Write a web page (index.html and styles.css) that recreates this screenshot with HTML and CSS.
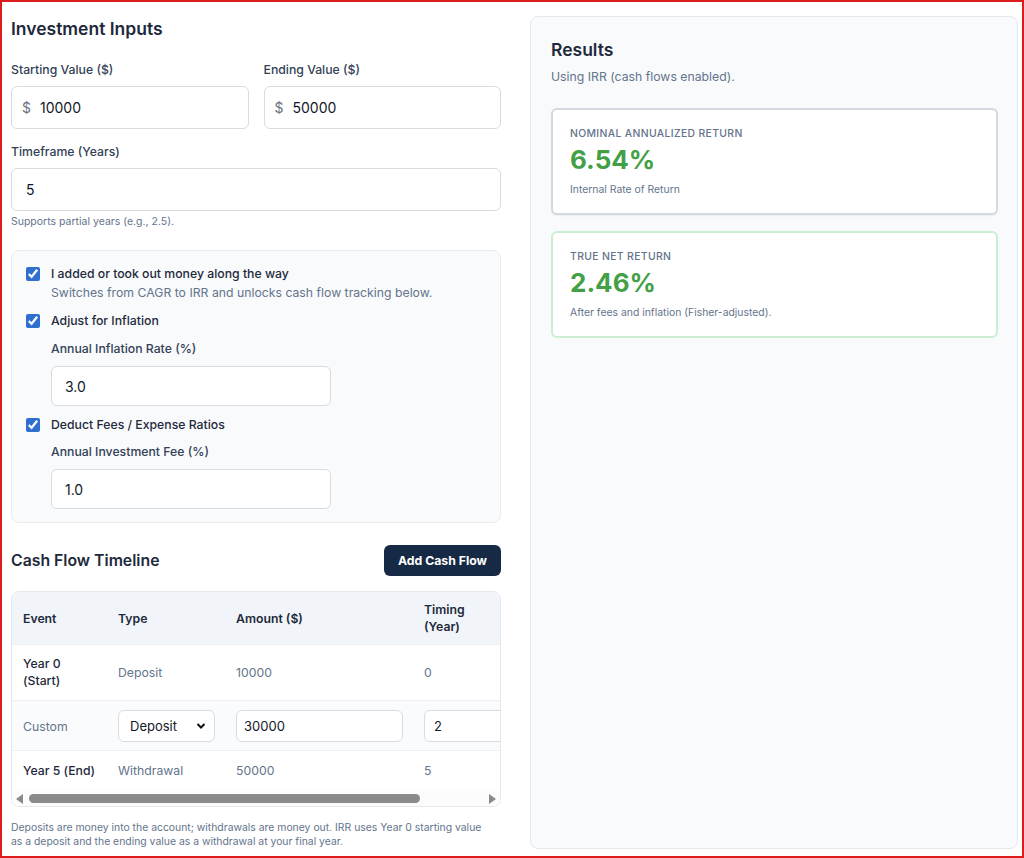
FILE: index.html
```html
<!DOCTYPE html>
<html lang="en">
<head>
  <meta charset="UTF-8" />
  <meta name="viewport" content="width=device-width, initial-scale=1.0" />
  <title>Annualized Return Calculator</title>
  <link rel="stylesheet" href="styles.css">
</head>
<body>
  <div class="frame">
    <div class="page">
      <!-- Inputs column -->
      <section class="inputs">
        <h2 class="section-title">Investment Inputs</h2>

        <div class="field-row">
          <div class="field">
            <label for="start-value">Starting Value ($)</label>
            <div class="money-input">
              <span class="prefix">$</span>
              <input type="text" id="start-value" value="10000">
            </div>
          </div>
          <div class="field">
            <label for="end-value">Ending Value ($)</label>
            <div class="money-input">
              <span class="prefix">$</span>
              <input type="text" id="end-value" value="50000">
            </div>
          </div>
        </div>

        <div class="field">
          <label for="years">Timeframe (Years)</label>
          <input type="text" id="years" class="text-input" value="5">
          <div class="hint">Supports partial years (e.g., 2.5).</div>
        </div>

        <div class="options">
          <label class="check">
            <input type="checkbox" checked>
            <span>I added or took out money along the way</span>
          </label>
          <div class="check-note">Switches from CAGR to IRR and unlocks cash flow tracking below.</div>

          <label class="check spaced">
            <input type="checkbox" checked>
            <span>Adjust for Inflation</span>
          </label>
          <div class="sub-field">
            <label for="inflation">Annual Inflation Rate (%)</label>
            <input type="text" id="inflation" class="text-input short" value="3.0">
          </div>

          <label class="check spaced">
            <input type="checkbox" checked>
            <span>Deduct Fees / Expense Ratios</span>
          </label>
          <div class="sub-field tight">
            <label for="fee">Annual Investment Fee (%)</label>
            <input type="text" id="fee" class="text-input short" value="1.0">
          </div>
        </div>

        <div class="timeline-head">
          <h3>Cash Flow Timeline</h3>
          <button type="button" class="btn-dark">Add Cash Flow</button>
        </div>

        <div class="table-wrap">
          <div class="table-scroll">
            <table class="flows">
              <colgroup>
                <col style="width: 95px">
                <col style="width: 118px">
                <col style="width: 188px">
                <col style="width: 171px">
              </colgroup>
              <thead>
                <tr>
                  <th>Event</th>
                  <th>Type</th>
                  <th>Amount ($)</th>
                  <th><span class="th-wrap">Timing (Year)</span></th>
                </tr>
              </thead>
              <tbody>
                <tr>
                  <td class="event">Year 0 (Start)</td>
                  <td class="muted">Deposit</td>
                  <td class="muted">10000</td>
                  <td class="muted">0</td>
                </tr>
                <tr class="custom">
                  <td class="muted">Custom</td>
                  <td>
                    <select class="cell-select">
                      <option selected>Deposit</option>
                      <option>Withdrawal</option>
                    </select>
                  </td>
                  <td><input type="text" class="cell-input" value="30000"></td>
                  <td><input type="text" class="cell-input timing" value="2"></td>
                </tr>
                <tr>
                  <td class="event">Year 5 (End)</td>
                  <td class="muted">Withdrawal</td>
                  <td class="muted">50000</td>
                  <td class="muted">5</td>
                </tr>
              </tbody>
            </table>
          </div>
          <div class="hscroll">
            <span class="arrow arrow-left"></span>
            <div class="track"><div class="thumb"></div></div>
            <span class="arrow arrow-right"></span>
          </div>
        </div>

        <p class="note">Deposits are money into the account; withdrawals are money out. IRR uses Year 0 starting value as a deposit and the ending value as a withdrawal at your final year.</p>
      </section>

      <!-- Results column -->
      <aside class="results">
        <h2 class="results-title">Results</h2>
        <p class="results-text">Using IRR (cash flows enabled).</p>

        <div class="cards">
          <div class="card">
            <div class="card-label">Nominal Annualized Return</div>
            <div class="card-value">6.54%</div>
            <div class="card-sub">Internal Rate of Return</div>
          </div>
          <div class="card card-net">
            <div class="card-label">True Net Return</div>
            <div class="card-value">2.46%</div>
            <div class="card-sub">After fees and inflation (Fisher-adjusted).</div>
          </div>
        </div>
      </aside>
    </div>
  </div>
</body>
</html>
```

FILE: styles.css
```css
body {
  margin: 0;
  font-family: 'Inter', 'Liberation Sans', sans-serif;
  background-color: #ffffff;
  color: #1e293b;
}

.frame {
  height: 100vh;
  box-sizing: border-box;
  border: 2px solid #dc1c1c;
  overflow: hidden;
}

.page {
  display: grid;
  grid-template-columns: 490px 1fr;
  column-gap: 29px;
  padding: 14px 4px 8px 9px;
}

/* Inputs column */
.inputs {
  padding-top: 1px;
}

.section-title {
  font-size: 17.5px;
  line-height: 24px;
  font-weight: 600;
  margin: 0 0 20px;
  color: #1e293b;
}

.field-row {
  display: grid;
  grid-template-columns: repeat(2, minmax(0, 1fr));
  gap: 15px;
  margin-bottom: 14px;
}

.field label,
.sub-field label {
  display: block;
  font-size: 12.25px;
  line-height: 18px;
  font-weight: 500;
  color: #334155;
  margin-bottom: 7px;
}

.money-input {
  display: flex;
  align-items: center;
  height: 43px;
  box-sizing: border-box;
  border: 1px solid #d7dce2;
  border-radius: 6px;
  background: #fff;
  padding: 0 10px;
}

.money-input .prefix {
  color: #6b7280;
  font-size: 14px;
  margin-right: 9px;
}

.money-input input {
  border: none;
  outline: none;
  width: 100%;
  min-width: 0;
  padding: 0;
  font-family: inherit;
  font-size: 14px;
  color: #111827;
  background: transparent;
}

.text-input {
  display: block;
  width: 100%;
  height: 43px;
  box-sizing: border-box;
  border: 1px solid #d7dce2;
  border-radius: 6px;
  background: #fff;
  padding: 0 14px;
  font-family: inherit;
  font-size: 14px;
  color: #111827;
}

.text-input.short {
  width: 280px;
  height: 40px;
  padding: 0 13px;
}

.hint {
  margin-top: 3px;
  font-size: 10.5px;
  line-height: 15px;
  color: #64748b;
}

.options {
  margin-top: 21px;
  padding: 14px 14px 13px;
  background: #f8fafc;
  border: 1px solid #e7ebf0;
  border-radius: 8px;
}

.check {
  display: flex;
  align-items: center;
  gap: 11px;
  font-size: 12.25px;
  line-height: 18px;
  font-weight: 500;
  color: #1e293b;
}

.check input {
  margin: 0;
  width: 14px;
  height: 14px;
  accent-color: #2f6fd0;
}

.check.spaced {
  margin-top: 10px;
}

.check-note {
  margin-top: 1px;
  padding-left: 25px;
  font-size: 12.25px;
  line-height: 18px;
  color: #64748b;
}

.sub-field {
  padding-left: 25px;
  margin-top: 10px;
}

.sub-field.tight {
  margin-top: 9px;
}

.sub-field label {
  margin-bottom: 8px;
}

.timeline-head {
  display: flex;
  align-items: center;
  justify-content: space-between;
  margin-top: 22px;
}

.timeline-head h3 {
  margin: 0;
  font-size: 15.8px;
  line-height: 20px;
  font-weight: 600;
  color: #1e293b;
}

.btn-dark {
  height: 31px;
  padding: 0 14px;
  border: none;
  border-radius: 6px;
  background-color: #172a45;
  color: #ffffff;
  font-family: inherit;
  font-size: 12.25px;
  font-weight: 700;
  cursor: pointer;
}

.table-wrap {
  margin-top: 15px;
  border: 1px solid #e5e9ee;
  border-radius: 8px;
  background: #fff;
  overflow: hidden;
}

.table-scroll {
  overflow: hidden;
}

.flows {
  width: 572px;
  table-layout: fixed;
  border-collapse: collapse;
  font-size: 12.25px;
  line-height: 17px;
}

.flows th {
  background: #f1f5f9;
  text-align: left;
  font-weight: 600;
  color: #1e293b;
  padding: 9px 11px;
}

.th-wrap {
  display: block;
  width: 60px;
}

.flows td {
  padding: 10px 10px 10px 11px;
  border-top: 1px solid #edf0f4;
  color: #1e293b;
}

.flows tbody tr:first-child td {
  padding-top: 10px;
  padding-bottom: 11px;
}

.flows tbody tr:last-child td {
  padding-top: 11px;
  padding-bottom: 12px;
}

.flows td.event {
  font-weight: 500;
}

.flows td.muted {
  color: #64748b;
}

.flows tr.custom td {
  background: #fafbfc;
  padding-top: 9px;
  padding-bottom: 8px;
}

.cell-select {
  width: 100%;
  height: 32px;
  box-sizing: border-box;
  border: 1px solid #d7dce2;
  border-radius: 6px;
  padding: 0 8px 0 11px;
  font-family: inherit;
  font-size: 13px;
  color: #111827;
  -webkit-appearance: none;
  appearance: none;
  background: #fff url("data:image/svg+xml,%3Csvg xmlns='http://www.w3.org/2000/svg' width='10' height='10'%3E%3Cpath d='M1.5 3 L5 6.5 L8.5 3' fill='none' stroke='%23111' stroke-width='2'/%3E%3C/svg%3E") no-repeat right 8px center;
}

.cell-input {
  width: 100%;
  height: 32px;
  box-sizing: border-box;
  border: 1px solid #d7dce2;
  border-radius: 6px;
  padding: 0 7px;
  font-family: inherit;
  font-size: 13px;
  color: #111827;
  background: #fff;
}

.cell-input.timing {
  padding: 0 9px;
}

/* Horizontal scrollbar drawn under the table */
.hscroll {
  display: flex;
  align-items: center;
  height: 15px;
  background: #fcfcfc;
  padding: 0 4px;
}

.track {
  flex: 1;
  padding: 0 0 0 6px;
}

.thumb {
  width: 391px;
  height: 9px;
  border-radius: 5px;
  background: #8a8a8a;
}

.arrow {
  width: 0;
  height: 0;
  border-top: 5px solid transparent;
  border-bottom: 5px solid transparent;
}

.arrow-left {
  border-right: 7px solid #8a8a8a;
}

.arrow-right {
  border-left: 7px solid #8a8a8a;
}

.note {
  margin: 14px 0 0;
  padding-right: 12px;
  font-size: 10.4px;
  line-height: 14px;
  color: #64748b;
}

/* Results column */
.results {
  background: #f8fafc;
  border: 1px solid #e3e8ee;
  border-radius: 8px;
  padding: 21px 19px 20px 20px;
}

.results-title {
  margin: 0;
  font-size: 17.5px;
  line-height: 24px;
  font-weight: 600;
  color: #1e293b;
}

.results-text {
  margin: 6px 0 0;
  font-size: 12.25px;
  line-height: 18px;
  color: #64748b;
}

.cards {
  margin-top: 22px;
  display: flex;
  flex-direction: column;
  gap: 16px;
}

.card {
  background: #ffffff;
  border: 2px solid #d2d9e1;
  border-radius: 6px;
  padding: 16px 17px;
  box-shadow: 0 1px 2px rgba(0, 0, 0, 0.06);
}

.card-net {
  border-color: #c9eed4;
  box-shadow: none;
}

.card-label {
  font-size: 10.4px;
  line-height: 15px;
  font-weight: 500;
  letter-spacing: 0.35px;
  text-transform: uppercase;
  color: #64748b;
}

.card-value {
  margin-top: 3px;
  font-size: 26px;
  line-height: 32px;
  font-weight: 700;
  color: #43a047;
}

.card-sub {
  margin-top: 6px;
  font-size: 10.4px;
  line-height: 15px;
  color: #64748b;
}
```
